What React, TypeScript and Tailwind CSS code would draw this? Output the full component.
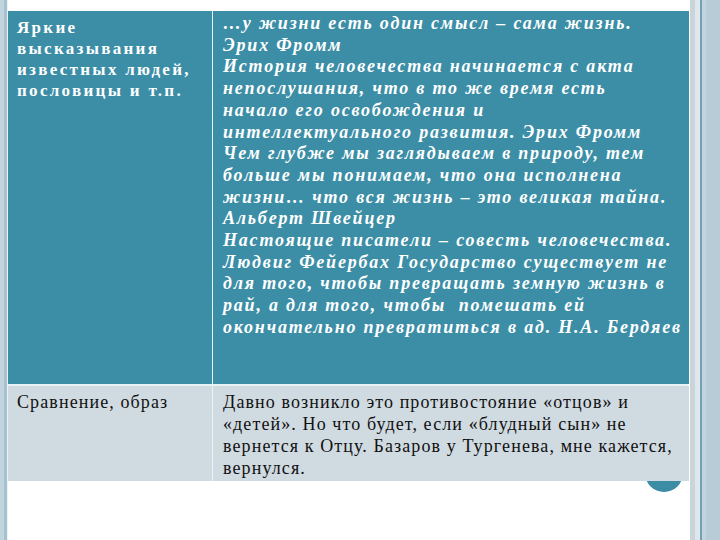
import React from 'react';

const quoteLines = [
  '…у жизни есть один смысл – сама жизнь.',
  'Эрих Фромм',
  'История человечества начинается с акта',
  'непослушания, что в то же время есть',
  'начало его освобождения и',
  'интеллектуального развития. Эрих Фромм',
  'Чем глубже мы заглядываем в природу, тем',
  'больше мы понимаем, что она исполнена',
  'жизни… что вся жизнь – это великая тайна.',
  'Альберт Швейцер',
  'Настоящие писатели – совесть человечества.',
  'Людвиг Фейербах Государство существует не',
  'для того, чтобы превращать земную жизнь в',
  'рай, а для того, чтобы  помешать ей',
  'окончательно превратиться в ад. Н.А. Бердяев',
];

const compareLines = [
  'Давно возникло это противостояние «отцов» и',
  '«детей». Но что будет, если «блудный сын» не',
  'вернется к Отцу. Базаров у Тургенева, мне кажется,',
  'вернулся.',
];

const App = () => {
  return (
    <div className="flex w-[720px] h-[540px] bg-white overflow-hidden">
      {/* left edge strip */}
      <div className="flex w-[8px] shrink-0">
        <div className="w-[4px] bg-[#c2d5df]" />
        <div className="w-[3px] bg-[#a6c1cf]" />
        <div className="w-[1px] bg-[#eef3f5]" />
      </div>

      <div className="relative w-[682px] shrink-0 pt-[11px] pr-[2px]">
        <div className="absolute left-[637px] top-[454px] w-[38px] h-[38px] rounded-full bg-[#3b8ca4]" />
        <div className="relative grid grid-cols-[204px_476px] grid-rows-[373px_95px] gap-x-[1px] gap-y-[2px] bg-[#e9f3f6]">
          <div className="bg-[#3b8ea6] pl-[9px] pt-[6px] font-['Liberation_Serif',serif] text-[17px] leading-[21px] font-bold text-white tracking-[2.3px]">
            Яркие<br />
            высказывания<br />
            известных людей,<br />
            пословицы и т.п.
          </div>
          <div className="bg-[#3b8ea6] pl-[10px] pt-[2px] font-['Liberation_Serif',serif] text-[18px] leading-[21.7px] font-bold italic text-white tracking-[1.8px] whitespace-pre">
            {quoteLines.map((l, i) => (
              <div key={i}>{l}</div>
            ))}
          </div>
          <div className="bg-[#d0dae1] pl-[9px] pt-[5px] font-['Liberation_Serif',serif] text-[18px] leading-[22px] text-[#111] tracking-[1.1px]">
            Сравнение, образ
          </div>
          <div className="bg-[#d0dae1] pl-[10px] pt-[5px] font-['Liberation_Serif',serif] text-[18px] leading-[22px] text-[#111] tracking-[1.1px] whitespace-pre">
            {compareLines.map((l, i) => (
              <div key={i}>{l}</div>
            ))}
          </div>
        </div>
      </div>

      {/* right edge strip */}
      <div className="flex flex-1">
        <div className="w-[5px] bg-[#c9d4db]" />
        <div className="w-[5px] bg-[#e0e7eb]" />
        <div className="w-[2px] bg-[#72a2b9]" />
        <div className="w-[4px] bg-[#c3d4dd]" />
        <div className="flex-1 bg-[#b8ccd7]" />
      </div>
    </div>
  );
};

export default App;
